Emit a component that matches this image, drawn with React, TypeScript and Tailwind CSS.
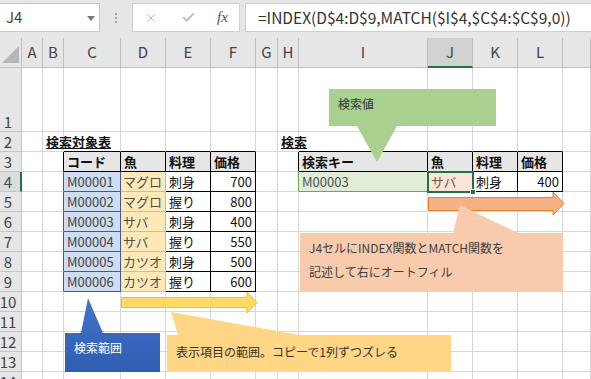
import { X, Check } from "lucide-react"

const COLS = ["A", "B", "C", "D", "E", "F", "G", "H", "I", "J", "K", "L", "M"]

const GRID = "border-r border-b border-[#d6d6d6]"
const HEAD = "border-r border-b border-black bg-[#e6e6e6] font-bold pl-[3px]"
const BLK = "border-r border-b border-black pl-[3px]"
const NUM = "border-r border-b border-black justify-end pr-[3px]"
const CODE = "border-r border-b border-[#3d5a96] bg-[#d0dcf0] text-[#454545] pl-[3px]"
const FISH = "border-r border-b border-r-[#efbf3c] border-b-[#dcc070] bg-[#fde9b8] text-[#505050] pl-[2px]"
const TOP = "border-r border-b border-r-[#d6d6d6] border-b-black"

// cells that differ from a plain grid cell
const cells: Record<string, { t?: string; c: string }> = {
  B2: { t: "検索対象表", c: "border-r border-b border-[#d6d6d6] font-bold underline whitespace-nowrap pl-[3px]" },
  C2: { c: TOP },
  D2: { c: TOP },
  E2: { c: TOP },
  F2: { c: TOP },
  H2: { t: "検索", c: "border-r border-b border-[#d6d6d6] font-bold underline whitespace-nowrap pl-[3px]" },
  I2: { c: TOP },
  J2: { c: TOP },
  K2: { c: TOP },
  L2: { c: TOP },
  B3: { c: "border-r border-b border-r-black border-b-[#d6d6d6]" },
  C3: { t: "コード", c: HEAD },
  D3: { t: "魚", c: HEAD },
  E3: { t: "料理", c: HEAD },
  F3: { t: "価格", c: HEAD },
  H3: { c: "border-r border-b border-r-black border-b-[#d6d6d6]" },
  I3: { t: "検索キー", c: HEAD },
  J3: { t: "魚", c: HEAD },
  K3: { t: "料理", c: HEAD },
  L3: { t: "価格", c: HEAD },
  H4: { c: "border-r border-b border-r-[#6aa84f] border-b-[#d6d6d6]" },
  I4: { t: "M00003", c: "border-r border-b border-[#6aa84f] bg-[#e0eed8] text-[#505050] pl-[3px]" },
  J4: { t: "サバ", c: "border-r border-b border-black bg-[#fce4d6] text-[#6a5a55] pl-[3px]" },
  K4: { t: "刺身", c: BLK },
  L4: { t: "400", c: NUM },
  D9: { t: "カツオ", c: "border-r border-b border-[#efbf3c] bg-[#fde9b8] text-[#505050] pl-[2px]" },
}

const rows = [
  ["M00001", "マグロ", "刺身", "700"],
  ["M00002", "マグロ", "握り", "800"],
  ["M00003", "サバ", "刺身", "400"],
  ["M00004", "サバ", "握り", "550"],
  ["M00005", "カツオ", "刺身", "500"],
  ["M00006", "カツオ", "握り", "600"],
]
rows.forEach((r, i) => {
  const n = i + 4
  cells["B" + n] = { c: "border-r border-b border-r-[#3d5a96] border-b-[#d6d6d6]" }
  cells["C" + n] = { t: r[0], c: CODE }
  if (!cells["D" + n]) cells["D" + n] = { t: r[1], c: FISH }
  cells["E" + n] = { t: r[2], c: BLK }
  cells["F" + n] = { t: r[3], c: NUM }
})

function FormulaBar() {
  return (
    <div className="flex h-[38px] items-start bg-[#e6e6e6] pt-[3px]">
      <div className="relative flex h-[29px] w-[100px] shrink-0 items-center border border-l-0 border-[#c8c8c8] bg-white pl-[6px] text-[15px] text-[#444]">
        J4
        <svg className="absolute left-[87px] top-[12px]" width="8" height="5" viewBox="0 0 8 5">
          <polygon points="0,0 8,0 4,5" fill="#777" />
        </svg>
      </div>
      <div className="flex h-[29px] w-[32px] shrink-0 flex-col items-center justify-center gap-[2px]">
        <span className="h-[2px] w-[2px] bg-[#a0a0a0]" />
        <span className="h-[2px] w-[2px] bg-[#a0a0a0]" />
        <span className="h-[2px] w-[2px] bg-[#a0a0a0]" />
      </div>
      <div className="flex h-[29px] w-[108px] shrink-0 items-center border border-[#d0d0d0] bg-white pl-[11px]">
        <X size={14} strokeWidth={1.6} color="#b4b4b4" />
        <Check size={15} strokeWidth={2.6} color="#b4b4b4" className="ml-[23px]" />
        <span className="ml-[21px] font-['Liberation_Serif',serif] text-[15px] italic text-[#555]">fx</span>
      </div>
      <div className="ml-[5px] flex h-[29px] w-[360px] shrink-0 items-center border border-[#d0d0d0] bg-white pl-[12px] text-[15.5px] text-[#333]">
        =INDEX(D$4:D$9,MATCH($I$4,$C$4:$C$9,0))
      </div>
    </div>
  )
}

function Sheet() {
  const rowNums = Array.from({ length: 14 }, (_, i) => i + 1)
  return (
    <div className="grid grid-cols-[22px_21px_21px_57px_45px_45px_45px_22px_21px_129px_45px_45px_45px_1fr] grid-rows-[30px_64px_repeat(13,20px)] text-[13px] text-[#111]">
      <div className="flex items-end border-r border-b border-[#c0c0c0] bg-[#e6e6e6] pb-[3px] pl-[2px]">
        <svg width="18" height="18" viewBox="0 0 18 18">
          <polygon points="17,0 17,17 0,17" fill="#b6b6b6" />
        </svg>
      </div>
      {COLS.map((c) =>
        c === "J" ? (
          <div key={c} className="flex items-center justify-center border-r border-b-2 border-r-[#c0c0c0] border-b-[#217346] bg-[#d2d2d2] text-[15px] text-[#2d5a3c]">
            {c}
          </div>
        ) : (
          <div key={c} className="flex items-center justify-center border-r border-b border-[#c0c0c0] bg-[#e6e6e6] text-[15px] text-[#444]">
            {c === "M" ? "" : c}
          </div>
        )
      )}
      {rowNums.map((r) => (
        <Row key={r} r={r} />
      ))}
    </div>
  )
}

function Row({ r }: { r: number }) {
  return (
    <>
      {r === 4 ? (
        <div className="flex items-end justify-center border-r-2 border-b border-r-[#217346] border-b-[#c6c6c6] bg-[#dcdcdc] pr-[4px] text-[15px] leading-[19px] text-[#2d5a3c]">
          {r}
        </div>
      ) : (
        <div className="flex items-end justify-center border-r border-b border-[#c6c6c6] bg-[#e6e6e6] pr-[5px] text-[15px] leading-[19px] text-[#444]">
          {r}
        </div>
      )}
      {COLS.map((c) => {
        const cell = cells[c + r]
        return (
          <div key={c} className={`flex items-center overflow-visible leading-[19px] ${cell ? cell.c : GRID}`}>
            {cell?.t}
          </div>
        )
      })}
    </>
  )
}

function Shapes() {
  return (
    <>
      <svg className="pointer-events-none absolute left-0 top-0" width="591" height="379" viewBox="0 0 591 379">
        <defs>
          <linearGradient id="blue" x1="0" y1="0" x2="0" y2="1">
            <stop offset="0" stopColor="#4175cc" />
            <stop offset="1" stopColor="#2f5cb0" />
          </linearGradient>
        </defs>
        <polygon points="329,89 496,89 496,126 397,126 377,162 357,126 329,126" fill="#a9d08e" />
        <polygon points="428.5,197.5 553,197.5 553,192 564,203.5 553,215 553,210.5 428.5,210.5" fill="#f4b183" stroke="#ed7d31" />
        <polygon points="300,233 453,233 460,205 518,233 563,233 563,291 300,291" fill="#f8cbad" />
        <polygon points="121.5,297.5 247,297.5 247,292 257,302.5 247,313 247,307.5 121.5,307.5" fill="#ffd966" stroke="#ffc000" />
        <polygon points="65,333 81,333 88,298 103,333 160,333 160,372 65,372" fill="url(#blue)" />
        <polygon points="167,335 178,335 171,312 300,335 451,335 451,372 167,372" fill="#ffd586" />
      </svg>
      <div className="absolute left-[427px] top-[171px] h-[22px] w-[47px] border-2 border-[#217346]" />
      <div className="absolute left-[470px] top-[189px] h-[6px] w-[6px] border border-white bg-[#217346]" />
      <div className="absolute left-[338px] top-[95px] text-[12px] leading-[18px] text-[#333]">検索値</div>
      <div className="absolute left-[309px] top-[236px] text-[12px] leading-[24px] text-[#404040]">
        <div>J4セルにINDEX関数とMATCH関数を</div>
        <div>記述して右にオートフィル</div>
      </div>
      <div className="absolute left-[74px] top-[339px] text-[12px] leading-[18px] text-white">検索範囲</div>
      <div className="absolute left-[176px] top-[343px] text-[12px] leading-[18px] text-[#333]">
        表示項目の範囲。コピーで1列ずつズレる
      </div>
    </>
  )
}

export default function App() {
  return (
    <div className="relative h-[379px] w-[591px] overflow-hidden bg-white font-['Noto_Sans_CJK_JP','Noto_Sans',sans-serif]">
      <FormulaBar />
      <Sheet />
      <Shapes />
    </div>
  )
}
